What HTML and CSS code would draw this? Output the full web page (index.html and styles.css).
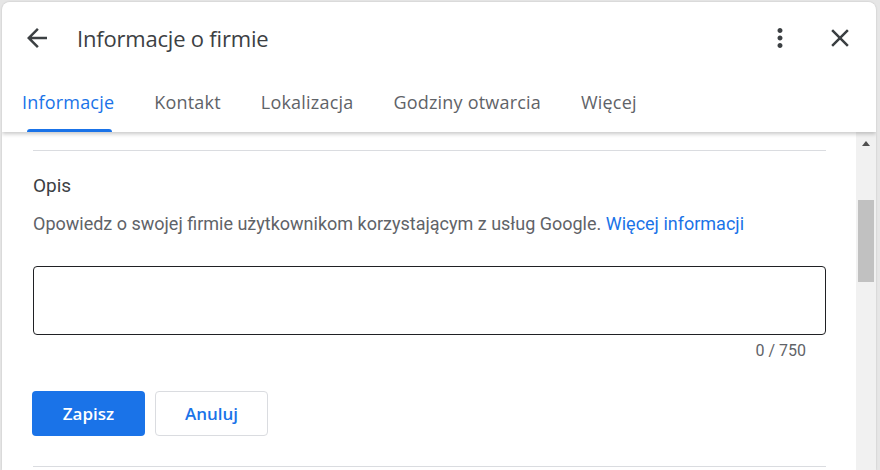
FILE: index.html
```html
<!DOCTYPE html>
<html lang="pl">
<head>
<meta charset="utf-8">
<title>Informacje o firmie</title>
<link rel="stylesheet" href="styles.css">
</head>
<body>
<div class="dialog">
  <header class="header">
    <div class="titlebar">
      <button class="icon-btn back" aria-label="Wstecz">
        <svg width="30" height="30" viewBox="0 0 24 24"><path d="M20 11H7.83l5.59-5.59L12 4l-8 8 8 8 1.41-1.41L7.83 13H20v-2z" fill="#3c4043"/></svg>
      </button>
      <h1 class="title">Informacje o firmie</h1>
      <div class="spacer"></div>
      <button class="icon-btn more" aria-label="Więcej opcji">
        <svg width="30" height="30" viewBox="0 0 24 24"><path d="M12 8c1.1 0 2-.9 2-2s-.9-2-2-2-2 .9-2 2 .9 2 2 2zm0 2c-1.1 0-2 .9-2 2s.9 2 2 2 2-.9 2-2-.9-2-2-2zm0 6c-1.1 0-2 .9-2 2s.9 2 2 2 2-.9 2-2-.9-2-2-2z" fill="#3c4043"/></svg>
      </button>
      <button class="icon-btn close" aria-label="Zamknij">
        <svg width="30" height="30" viewBox="0 0 24 24"><path d="M19 6.41L17.59 5 12 10.59 6.41 5 5 6.41 10.59 12 5 17.59 6.41 19 12 13.41 17.59 19 19 17.59 13.41 12z" fill="#3c4043"/></svg>
      </button>
    </div>
    <nav class="tabs">
      <a class="tab active">Informacje</a>
      <a class="tab">Kontakt</a>
      <a class="tab">Lokalizacja</a>
      <a class="tab">Godziny otwarcia</a>
      <a class="tab">Więcej</a>
    </nav>
  </header>
  <div class="body">
    <main class="content">
      <hr class="divider">
      <h2 class="section-title">Opis</h2>
      <p class="desc">Opowiedz o swojej firmie użytkownikom korzystającym z usług Google. <a class="link">Więcej informacji</a></p>
      <div class="textarea"></div>
      <div class="counter">0 / 750</div>
      <div class="actions">
        <button class="btn primary">Zapisz</button>
        <button class="btn secondary">Anuluj</button>
      </div>
      <hr class="divider bottom">
    </main>
    <div class="scrollbar">
      <div class="arrow-up"></div>
      <div class="thumb"></div>
    </div>
  </div>
</div>
</body>
</html>
```
FILE: styles.css
```css
html, body {
  margin: 0;
  padding: 0;
  height: 100%;
  overflow: hidden;
}
body {
  background: #e6e6e6;
  font-family: Roboto, "Liberation Sans", Arial, sans-serif;
}
.dialog {
  margin: 2px 4px 0 2px;
  height: 468px;
  background: #fff;
  border-radius: 8px 8px 0 0;
  display: flex;
  flex-direction: column;
  overflow: hidden;
  box-shadow: 0 0 2px rgba(0,0,0,.2);
}
.header {
  position: relative;
  z-index: 2;
  height: 130px;
  background: #fff;
  box-shadow: 0 2px 4px rgba(0,0,0,.22);
  display: flex;
  flex-direction: column;
}
.titlebar {
  height: 72px;
  display: flex;
  align-items: center;
  padding: 0 0 0 20px;
}
.icon-btn {
  width: 30px;
  height: 30px;
  border: 0;
  padding: 0;
  margin: 0;
  background: none;
  display: flex;
  align-items: center;
  justify-content: center;
}
.title {
  margin: 0 0 0 25px;
  font-weight: 400;
  font-size: 22px;
  color: #3c4043;
  font-family: "Open Sans", Roboto, sans-serif;
  letter-spacing: -0.2px;
}
.spacer { flex: 1; }
.more { margin-right: 30px; }
.close { margin-right: 21px; }
.tabs {
  flex: 1;
  display: flex;
  padding-left: 0;
}
.tab {
  position: relative;
  padding: 0 20px;
  display: flex;
  align-items: center;
  font-family: "Open Sans", Roboto, sans-serif;
  font-size: 18px;
  font-weight: 500;
  letter-spacing: 0.2px;
  color: #5f6368;
  padding-bottom: 2px;
}
.tab.active { color: #1a73e8; }
.tab.active::after {
  content: "";
  position: absolute;
  left: 25px;
  right: 22px;
  bottom: 0;
  height: 3px;
  background: #1a73e8;
  border-radius: 3px 3px 0 0;
}
.body {
  flex: 1;
  display: flex;
  min-height: 0;
}
.content {
  flex: 1;
  padding: 18px 30px 0 31px;
}
.divider {
  margin: 0;
  border: 0;
  border-top: 1px solid #dadce0;
}
.section-title {
  margin: 22px 0 0;
  font-size: 19px;
  font-weight: 400;
  color: #3c4043;
  line-height: 26px;
}
.desc {
  margin: 12px 0 0;
  font-size: 18px;
  line-height: 26px;
  color: #5f6368;
}
.link { color: #1a73e8; }
.textarea {
  margin-top: 29px;
  height: 67px;
  border: 1px solid #202124;
  border-radius: 4px;
}
.counter {
  text-align: right;
  padding-right: 20px;
  margin-top: 6px;
  font-size: 16px;
  line-height: 20px;
  color: #5f6368;
}
.actions {
  display: flex;
  gap: 10px;
  margin-top: 30px;
  margin-left: -1px;
}
.btn {
  width: 113px;
  height: 45px;
  border-radius: 4px;
  font-family: "Open Sans", Roboto, sans-serif;
  font-size: 17px;
  font-weight: 600;
  padding: 0;
}
.primary {
  background: #1a73e8;
  color: #fff;
  border: 0;
}
.secondary {
  background: #fff;
  color: #1a73e8;
  border: 1px solid #dadce0;
}
.bottom { margin-top: 30px; }
.scrollbar {
  width: 20px;
  background: #f1f1f1;
  display: flex;
  flex-direction: column;
  align-items: center;
}
.arrow-up {
  margin-top: 9px;
  width: 0;
  height: 0;
  border-left: 4px solid transparent;
  border-right: 4px solid transparent;
  border-bottom: 5px solid #505050;
}
.thumb {
  margin-top: 54px;
  width: 16px;
  height: 82px;
  background: #c1c1c1;
}
```
